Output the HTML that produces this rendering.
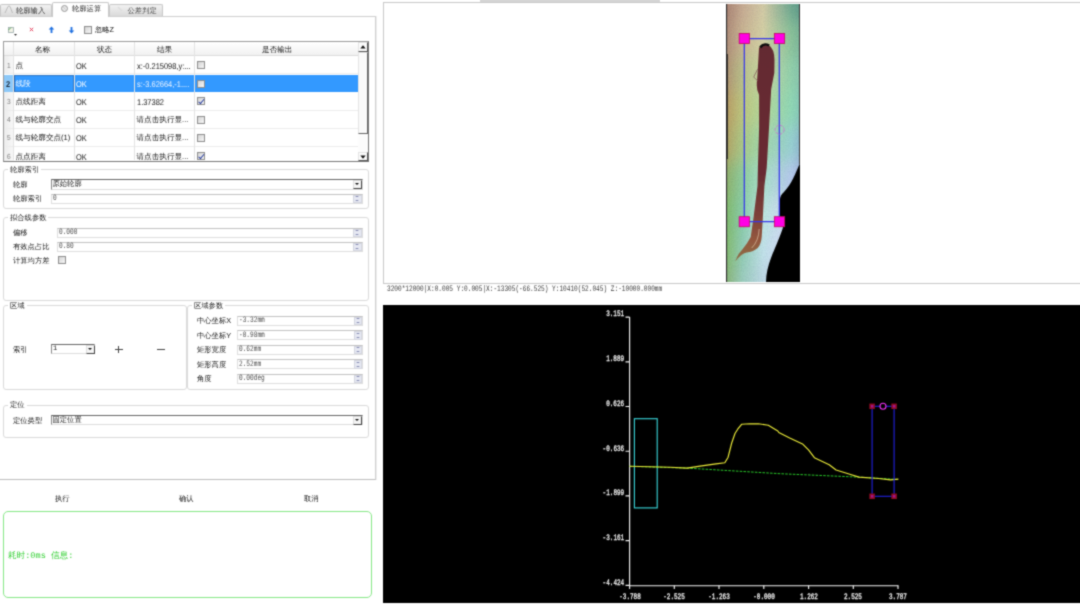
<!DOCTYPE html>
<html lang="zh">
<head>
<meta charset="utf-8">
<title>轮廓运算</title>
<style>
*{box-sizing:border-box;margin:0;padding:0}
html,body{width:1080px;height:607px;overflow:hidden;background:#fff}
body{position:relative;text-rendering:geometricPrecision;-webkit-font-smoothing:antialiased;font-family:"Liberation Sans",sans-serif;font-size:7.6px;color:#141414;filter:url(#soft)}
.a{position:absolute}
.t{position:absolute;white-space:nowrap;line-height:10px;height:10px}
.tab{position:absolute;border:1px solid #c8c8c8;border-bottom:none;background:linear-gradient(#f1f1f1,#dadada);border-radius:2px 2px 0 0}
.grp{position:absolute;border:1px solid #dadada;border-radius:3px}
.glab{position:absolute;background:#fff;padding:0 2px;line-height:9px;height:9px;white-space:nowrap;color:#222}
.inp{position:absolute;border:1px solid #dedede;border-top-color:#c2c2c2;background:#fff;height:10px}
.inp span{position:absolute;left:1px;top:.7px;line-height:8.5px;font-family:"Liberation Mono",monospace;font-size:8.2px;color:#4a4a4a;white-space:nowrap;transform-origin:0 50%;transform:scaleX(.75)}
.spin{position:absolute;right:0;top:0;width:8.5px;height:8.5px;background:#e6e8f2;border:1px solid #d4d6e0}
.spin:before{content:"";position:absolute;left:1.25px;top:0.7px;border:2px solid transparent;border-top:none;border-bottom:1.8px solid #6a70a0}
.spin:after{content:"";position:absolute;left:1.25px;bottom:0.7px;border:2px solid transparent;border-bottom:none;border-top:1.8px solid #6a70a0}
.cmb{position:absolute;border:1px solid #dcdcdc;border-top:1.5px solid #666;border-left:1px solid #888;background:#fff;height:10.5px}
.cmb span{position:absolute;left:1px;top:0;line-height:8px;white-space:nowrap;color:#1c1c1c;font-size:7.3px}
.cmb i{position:absolute;right:-0.5px;top:0;width:9px;height:9px;background:#f4f4f4;border:1px solid #e0e0e0;border-right:1.3px solid #444;border-bottom:1.3px solid #444}
.cmb i:after{content:"";position:absolute;left:1.3px;top:2.2px;border:2.2px solid transparent;border-bottom:none;border-top:2.6px solid #111}
.cb{position:absolute;width:8px;height:8px;border:1px solid #8e8e8e;background:linear-gradient(135deg,#d4d4d4,#f6f6f6)}
.cb.on:after{content:"";position:absolute;left:2px;top:0;width:2px;height:4.5px;border:solid #2a3fa0;border-width:0 1.3px 1.3px 0;transform:rotate(40deg)}
.row{position:absolute;left:4px;width:354px;height:18.2px;border-bottom:1px solid #ececec;background:#fff}
.row .t{top:4.5px}
.rn{position:absolute;left:0;top:0;width:9.5px;height:100%;background:linear-gradient(90deg,#ececec,#f8f8f8)}
.vl{position:absolute;top:0;bottom:0;width:1px;background:#e6e6e6}
.ax{font-family:"Liberation Mono",monospace;font-size:8.4px;color:#f2f2f2;-webkit-text-stroke:.3px currentColor;position:absolute;white-space:nowrap;line-height:8px;height:8px;transform:scaleX(.714)}
.l{display:inline-block;font-size:8.4px;transform:scaleX(.89);transform-origin:0 50%}
.g{font-size:7.3px}
</style>
</head>
<body>
<svg width="0" height="0" style="position:absolute"><filter id="soft" x="0" y="0" width="100%" height="100%" color-interpolation-filters="sRGB"><feConvolveMatrix order="3" kernelMatrix="1 3 1 3 12 3 1 3 1" divisor="28" edgeMode="duplicate" preserveAlpha="true"/></filter></svg>
<!-- ============ LEFT PANEL ============ -->
<div class="a" id="pane" style="left:-1px;top:16px;width:377px;height:464.3px;border:1px solid #cfcfcf;border-bottom:1.5px solid #bdbdbd;background:#fff"></div>
<div class="a" style="left:376px;top:16px;width:1px;height:464px;background:#ededed"></div>

<!-- tabs -->
<div class="tab" style="left:0;top:4px;width:52px;height:12px"></div>
<div class="tab" style="left:109px;top:3.5px;width:54px;height:12.5px"></div>
<div class="tab" style="left:52px;top:1.5px;width:57px;height:15.5px;background:#fff"></div>
<div class="t g" style="left:16px;top:5.6px;color:#333">轮廓输入</div>
<div class="t g" style="left:72px;top:4.2px;color:#222">轮廓运算</div>
<div class="t g" style="left:127.5px;top:5.6px;color:#444">公差判定</div>
<svg class="a" style="left:4px;top:5px" width="10" height="9" viewBox="0 0 10 9"><path d="M1 8 L4 1.5 Q5 0.5 6 1.5 L8.5 8" fill="none" stroke="#bbb" stroke-width="1"/></svg>
<svg class="a" style="left:60px;top:4px" width="9" height="9" viewBox="0 0 9 9"><circle cx="4.5" cy="4.5" r="3" fill="#e8e8e8" stroke="#999" stroke-width="1"/><path d="M3.5 3.5 L5.5 5" stroke="#bbb" stroke-width=".8"/></svg>
<svg class="a" style="left:116px;top:5px" width="10" height="9" viewBox="0 0 10 9"><path d="M2 2 L6 6" stroke="#ddd" stroke-width="1.6"/></svg>

<!-- toolbar -->
<svg class="a" style="left:7px;top:26px" width="12" height="11" viewBox="0 0 12 11"><rect x="1.5" y="1.5" width="5" height="5" fill="#f2f2e6" stroke="#9aa" stroke-width=".8"/><path d="M1.5 4 L4 1.5" stroke="#5a5" stroke-width="1"/><path d="M7 8 h3 l-1.5 1.8z" fill="#222"/></svg>
<svg class="a" style="left:28.5px;top:27.3px" width="5" height="5" viewBox="0 0 6 6"><path d="M1 1 L5 5 M5 1 L1 5" stroke="#e23a55" stroke-width="1.2"/></svg>
<svg class="a" style="left:48px;top:26px" width="7" height="8" viewBox="0 0 7 8"><path d="M3.5 0.5 L6.3 3.6 H4.4 V7 H2.6 V3.6 H0.7z" fill="#1e6fe0"/></svg>
<svg class="a" style="left:68px;top:26px" width="7" height="8" viewBox="0 0 7 8"><path d="M3.5 7.5 L0.7 4.4 H2.6 V1 H4.4 V4.4 H6.3z" fill="#1e6fe0"/></svg>
<div class="cb" style="left:84px;top:26px"></div>
<div class="t g" style="left:95px;top:25px">忽略Z</div>

<!-- table -->
<div class="a" id="tbl" style="left:3px;top:41px;width:366px;height:120.5px;border:1px solid #9a9a9a;border-bottom:1.5px solid #777;border-right:1.5px solid #777;background:#fff"></div>
<div class="a" style="left:4px;top:42px;width:354px;height:14px;background:linear-gradient(#fff,#f1f1f1);border-bottom:1px solid #dcdcdc"></div>
<div class="t" style="left:35px;top:45px">名称</div>
<div class="t" style="left:97px;top:45px">状态</div>
<div class="t" style="left:157px;top:45px">结果</div>
<div class="t" style="left:262px;top:45px">是否输出</div>
<div id="rows"></div>
<div class="row" style="top:56px"><div class="rn"></div><div class="t l" style="left:2.5px;font-size:7.4px;color:#7c7c7c">1</div><div class="t" style="left:11.5px">点</div><div class="t l" style="left:72px">OK</div><div class="t l" style="left:132.5px">x:-0.215098,y:...</div><div class="cb" style="left:193px;top:5px"></div></div>
<div class="row" style="top:74.8px;height:17.6px;background:#3399ff;border-bottom-color:#3399ff"><div class="a" style="left:0;top:0;width:9.5px;height:17px;background:#8cc8f8"></div><div class="a" style="left:9.5px;top:0;width:60.5px;height:17px;border:1px solid #2f78c8;border-left:1.5px solid #2a66ac"></div><div class="t l" style="left:1.8px;font-size:8.4px;color:#1c2a3a;font-weight:bold">2</div><div class="t" style="left:11.5px;color:#fff">线段</div><div class="t l" style="left:72px;color:#fff">OK</div><div class="t l" style="left:132.5px;color:#e8f2ff">s:-3.62664,-1....</div><div class="cb" style="left:193px;top:5px"></div></div>
<div class="row" style="top:92.4px"><div class="rn"></div><div class="t l" style="left:2.5px;font-size:7.4px;color:#7c7c7c">3</div><div class="t" style="left:11.5px">点线距离</div><div class="t l" style="left:72px">OK</div><div class="t l" style="left:132.5px">1.37382</div><div class="cb on" style="left:193px;top:5px"></div></div>
<div class="row" style="top:110.6px"><div class="rn"></div><div class="t l" style="left:2.5px;font-size:7.4px;color:#7c7c7c">4</div><div class="t" style="left:11.5px">线与轮廓交点</div><div class="t l" style="left:72px">OK</div><div class="t" style="left:132.5px">请点击执行显...</div><div class="cb" style="left:193px;top:5px"></div></div>
<div class="row" style="top:128.8px"><div class="rn"></div><div class="t l" style="left:2.5px;font-size:7.4px;color:#7c7c7c">5</div><div class="t" style="left:11.5px">线与轮廓交点(1)</div><div class="t l" style="left:72px">OK</div><div class="t" style="left:132.5px">请点击执行显...</div><div class="cb" style="left:193px;top:5px"></div></div>
<div class="row" style="top:147px;height:13.5px;border-bottom:none;overflow:hidden"><div class="rn"></div><div class="t l" style="left:2.5px;font-size:7.4px;color:#7c7c7c">6</div><div class="t" style="left:11.5px">点点距离</div><div class="t l" style="left:72px">OK</div><div class="t" style="left:132.5px">请点击执行显...</div><div class="cb on" style="left:193px;top:5px"></div></div>
<!-- column lines -->
<div class="a" style="left:13px;top:42px;width:1px;height:118px;background:#e3e3e3"></div>
<div class="a" style="left:73.5px;top:42px;width:1px;height:118px;background:#e3e3e3"></div>
<div class="a" style="left:134px;top:42px;width:1px;height:118px;background:#e3e3e3"></div>
<div class="a" style="left:194px;top:42px;width:1px;height:118px;background:#e3e3e3"></div>
<!-- scrollbar -->
<div class="a" style="left:358px;top:42px;width:10px;height:118.5px;background:#fcfcfc"></div>
<div class="a" style="left:358px;top:42px;width:10px;height:10px;background:#fbfbfb;border:1px solid #e4e4e4;border-right-color:#555;border-bottom-color:#555"></div>
<div class="a" style="left:358px;top:52px;width:10px;height:82px;background:#fafafa;border:1px solid #e4e4e4;border-right:1.5px solid #666;border-bottom:1.5px solid #666"></div>
<div class="a" style="left:358px;top:151.5px;width:10px;height:9.5px;background:#fbfbfb;border:1px solid #e4e4e4;border-right-color:#555;border-bottom-color:#555"></div>
<svg class="a" style="left:360px;top:44.5px" width="6" height="4" viewBox="0 0 6 4"><path d="M3 0.3 L5.7 3.5 H0.3z" fill="#111"/></svg>
<svg class="a" style="left:360px;top:154.5px" width="6" height="4" viewBox="0 0 6 4"><path d="M3 3.7 L5.7 0.5 H0.3z" fill="#111"/></svg>

<!-- group: 轮廓索引 -->
<div class="grp" style="left:3px;top:169px;width:366px;height:40px"></div>
<div class="glab g" style="left:8px;top:165px">轮廓索引</div>
<div class="t g" style="left:13px;top:180px">轮廓</div>
<div class="cmb" style="left:50.5px;top:179px;width:312px"><span>原始轮廓</span><i></i></div>
<div class="t g" style="left:13px;top:194px">轮廓索引</div>
<div class="inp" style="left:50.5px;top:193.5px;width:312px"><span>0</span><div class="spin"></div></div>

<!-- group: 拟合线参数 -->
<div class="grp" style="left:3px;top:217px;width:366px;height:84px"></div>
<div class="glab g" style="left:8px;top:213px">拟合线参数</div>
<div class="t g" style="left:13px;top:228px">偏移</div>
<div class="inp" style="left:57px;top:227.5px;width:305.5px"><span>0.000</span><div class="spin"></div></div>
<div class="t g" style="left:13px;top:242px">有效点占比</div>
<div class="inp" style="left:57px;top:241.5px;width:305.5px"><span>0.80</span><div class="spin"></div></div>
<div class="t g" style="left:13px;top:256px">计算均方差</div>
<div class="cb" style="left:57.5px;top:256px"></div>

<!-- group: 区域 -->
<div class="grp" style="left:3px;top:305px;width:183.5px;height:85px"></div>
<div class="glab g" style="left:8px;top:301px">区域</div>
<div class="t g" style="left:13px;top:345px">索引</div>
<div class="cmb" style="left:51px;top:343.8px;width:44px"><span style="font-family:'Liberation Mono',monospace;font-size:7px">1</span><i></i></div>
<div class="a" style="left:115px;top:349px;width:7.5px;height:1px;background:#444"></div>
<div class="a" style="left:118.3px;top:345.7px;width:1px;height:7.6px;background:#444"></div>
<div class="a" style="left:157px;top:348.9px;width:8px;height:1.2px;background:#444"></div>

<!-- group: 区域参数 -->
<div class="grp" style="left:187px;top:305px;width:182px;height:85px"></div>
<div class="glab g" style="left:192px;top:301px">区域参数</div>
<div class="t g" style="left:197px;top:316px">中心坐标X</div>
<div class="inp" style="left:237px;top:315.5px;width:126px"><span>-3.32mm</span><div class="spin"></div></div>
<div class="t g" style="left:197px;top:330.5px">中心坐标Y</div>
<div class="inp" style="left:237px;top:330px;width:126px"><span>-0.98mm</span><div class="spin"></div></div>
<div class="t g" style="left:197px;top:345px">矩形宽度</div>
<div class="inp" style="left:237px;top:344.5px;width:126px"><span>0.62mm</span><div class="spin"></div></div>
<div class="t g" style="left:197px;top:359.5px">矩形高度</div>
<div class="inp" style="left:237px;top:359px;width:126px"><span>2.52mm</span><div class="spin"></div></div>
<div class="t g" style="left:197px;top:374px">角度</div>
<div class="inp" style="left:237px;top:373.5px;width:126px"><span>0.00deg</span><div class="spin"></div></div>

<!-- group: 定位 -->
<div class="grp" style="left:3px;top:405px;width:366px;height:32.5px"></div>
<div class="glab g" style="left:8px;top:400px">定位</div>
<div class="t g" style="left:13px;top:415.5px">定位类型</div>
<div class="cmb" style="left:50.5px;top:414.5px;width:312px"><span>固定位置</span><i></i></div>

<!-- buttons -->
<div class="t g" style="left:55px;top:494px">执行</div>
<div class="t g" style="left:179px;top:494px">确认</div>
<div class="t g" style="left:304px;top:494px">取消</div>

<!-- message box -->
<div class="a" style="left:2.5px;top:511px;width:369px;height:87px;border:1.3px solid #86e886;border-radius:5px;background:#fff"></div>
<div class="t" style="left:8px;top:550px;color:#35d035;font-family:'Liberation Mono',monospace;font-size:8.6px"><span style="font-family:'Liberation Sans',sans-serif">耗时</span>:0ms <span style="font-family:'Liberation Sans',sans-serif">信息</span>:</div>

<!-- ============ RIGHT TOP: IMAGE VIEW ============ -->
<div class="a" style="left:480px;top:0;width:180px;height:1.5px;background:#d5d5d5"></div>
<div class="a" id="imgpane" style="left:383px;top:1.5px;width:700px;height:282px;border:1.5px solid #c8c8c8;background:#fff"></div>
<svg class="a" id="strip" style="left:726px;top:3.5px" width="74" height="278" viewBox="0 0 74 278">
<defs>
<linearGradient id="r0" x1="0" y1="0" x2="1" y2="0"><stop offset="0" stop-color="#a07868"/><stop offset="0.15" stop-color="#a07868"/><stop offset="0.32" stop-color="#c4a68e"/><stop offset="0.5" stop-color="#d0c6a2"/><stop offset="0.75" stop-color="#62a088"/><stop offset="1" stop-color="#2f7074"/></linearGradient>
<linearGradient id="r1" x1="0" y1="0" x2="1" y2="0"><stop offset="0" stop-color="#a27a6a"/><stop offset="0.15" stop-color="#a27a6a"/><stop offset="0.32" stop-color="#c6aa90"/><stop offset="0.5" stop-color="#d2caa4"/><stop offset="0.75" stop-color="#6ea88e"/><stop offset="1" stop-color="#387878"/></linearGradient>
<linearGradient id="r2" x1="0" y1="0" x2="1" y2="0"><stop offset="0" stop-color="#aa8472"/><stop offset="0.15" stop-color="#aa8472"/><stop offset="0.32" stop-color="#c8b490"/><stop offset="0.5" stop-color="#d4d0a2"/><stop offset="0.75" stop-color="#8ac298"/><stop offset="1" stop-color="#589a96"/></linearGradient>
<linearGradient id="r3" x1="0" y1="0" x2="1" y2="0"><stop offset="0" stop-color="#ae8a6c"/><stop offset="0.15" stop-color="#ae8a6c"/><stop offset="0.32" stop-color="#b8c088"/><stop offset="0.5" stop-color="#c8d8a0"/><stop offset="0.75" stop-color="#90d0aa"/><stop offset="1" stop-color="#72aeae"/></linearGradient>
<linearGradient id="r4" x1="0" y1="0" x2="1" y2="0"><stop offset="0" stop-color="#b8945c"/><stop offset="0.15" stop-color="#b8945c"/><stop offset="0.32" stop-color="#bcc67c"/><stop offset="0.5" stop-color="#b4d898"/><stop offset="0.75" stop-color="#8ed8b4"/><stop offset="1" stop-color="#70a4ba"/></linearGradient>
<linearGradient id="r5" x1="0" y1="0" x2="1" y2="0"><stop offset="0" stop-color="#b49c5c"/><stop offset="0.15" stop-color="#b49c5c"/><stop offset="0.32" stop-color="#aac884"/><stop offset="0.5" stop-color="#a0d8aa"/><stop offset="0.75" stop-color="#96d0d0"/><stop offset="1" stop-color="#7a86c2"/></linearGradient>
<linearGradient id="r6" x1="0" y1="0" x2="1" y2="0"><stop offset="0" stop-color="#8eac60"/><stop offset="0.15" stop-color="#8eac60"/><stop offset="0.32" stop-color="#8ccc9c"/><stop offset="0.5" stop-color="#a8e0c8"/><stop offset="0.75" stop-color="#b4c8ec"/><stop offset="1" stop-color="#8e8eca"/></linearGradient>
<linearGradient id="r7" x1="0" y1="0" x2="1" y2="0"><stop offset="0" stop-color="#7eb85e"/><stop offset="0.15" stop-color="#7eb85e"/><stop offset="0.32" stop-color="#88cca8"/><stop offset="0.5" stop-color="#bce6de"/><stop offset="0.75" stop-color="#d0d6f6"/><stop offset="1" stop-color="#a8a8dc"/></linearGradient>
<linearGradient id="r8" x1="0" y1="0" x2="1" y2="0"><stop offset="0" stop-color="#80b860"/><stop offset="0.15" stop-color="#80b860"/><stop offset="0.32" stop-color="#90ccb2"/><stop offset="0.5" stop-color="#c0e2e8"/><stop offset="0.75" stop-color="#d6d6f8"/><stop offset="1" stop-color="#b0b0d8"/></linearGradient>
<linearGradient id="r9" x1="0" y1="0" x2="1" y2="0"><stop offset="0" stop-color="#84b06a"/><stop offset="0.15" stop-color="#84b06a"/><stop offset="0.32" stop-color="#9accbc"/><stop offset="0.5" stop-color="#bcd8e4"/><stop offset="0.75" stop-color="#d0d0f2"/><stop offset="1" stop-color="#b0b0d8"/></linearGradient>
<linearGradient id="r10" x1="0" y1="0" x2="1" y2="0"><stop offset="0" stop-color="#84b06a"/><stop offset="0.15" stop-color="#84b06a"/><stop offset="0.32" stop-color="#9accbc"/><stop offset="0.5" stop-color="#bcd8e4"/><stop offset="0.75" stop-color="#d0d0f2"/><stop offset="1" stop-color="#b0b0d8"/></linearGradient>
<filter id="vb" x="-30%" y="-10%" width="160%" height="120%"><feGaussianBlur stdDeviation="0 9"/></filter>
<filter id="bl"><feGaussianBlur stdDeviation="0.5"/></filter>
<filter id="nz" x="0" y="0" width="100%" height="100%"><feTurbulence type="fractalNoise" baseFrequency="0.9" numOctaves="2" seed="3" result="n"/><feColorMatrix type="matrix" values="0 0 0 0 1  0 0 0 0 1  0 0 0 0 1  0.9 0 0 0 -0.33"/></filter>
<filter id="nd" x="0" y="0" width="100%" height="100%"><feTurbulence type="fractalNoise" baseFrequency="0.8" numOctaves="2" seed="11" result="n"/><feColorMatrix type="matrix" values="0 0 0 0 0  0 0 0 0 0  0 0 0 0 0.1  0 0.9 0 0 -0.33"/></filter>
<linearGradient id="sg" gradientUnits="userSpaceOnUse" x1="0" y1="40" x2="0" y2="260"><stop offset="0" stop-color="#642a30"/><stop offset=".6" stop-color="#682c30"/><stop offset=".78" stop-color="#7c4038"/><stop offset=".9" stop-color="#94583e"/><stop offset="1" stop-color="#8a7048"/></linearGradient>
<clipPath id="cp"><rect width="74" height="278"/></clipPath>
</defs>
<g clip-path="url(#cp)">
<g filter="url(#vb)">
<rect x="-20" y="-40" width="114" height="30.5" fill="url(#r0)"/>
<rect x="-20" y="-10" width="114" height="28" fill="url(#r1)"/>
<rect x="-20" y="17.5" width="114" height="35.5" fill="url(#r2)"/>
<rect x="-20" y="52.5" width="114" height="35.5" fill="url(#r3)"/>
<rect x="-20" y="87.5" width="114" height="35.5" fill="url(#r4)"/>
<rect x="-20" y="122.5" width="114" height="35.5" fill="url(#r5)"/>
<rect x="-20" y="157.5" width="114" height="35.5" fill="url(#r6)"/>
<rect x="-20" y="192.5" width="114" height="35.5" fill="url(#r7)"/>
<rect x="-20" y="227.5" width="114" height="34.5" fill="url(#r8)"/>
<rect x="-20" y="261.5" width="114" height="28" fill="url(#r9)"/>
<rect x="-20" y="289" width="114" height="31.5" fill="url(#r10)"/>
</g>
<rect width="74" height="278" filter="url(#nz)" opacity=".16"/>
<rect width="74" height="278" filter="url(#nd)" opacity=".13"/>
<!-- black region bottom-right -->
<path d="M74.5 158 C70 168 66 180 58 188 Q54 191 54 196 L54 212 Q58 222 56.5 225 C52 238 48 246 45 254 C42 262 40 270 40 279 L74.5 279z" fill="#000"/>
<!-- dark specimen strip -->
<g transform="translate(0.7 -1)">
<path filter="url(#bl)" d="M32.3 45 Q36 40 42 42 Q48 46 47.8 58 L47.6 70 L44.5 86 L42.3 125 L40 165 L37.7 183 L36 217 L35 234 Q34.5 241 31 245 Q26 249 20 249.5 Q14 251 8.5 258.5 Q11 251 16 246 Q21 240 24 234 L26.5 217 L30.8 183 L31.2 165 L32.4 125 L32.4 92 Q29 86 30.5 76 Q31.5 60 32.3 45 Z" fill="url(#sg)"/>
<path d="M32.5 226 Q32 238 25 245" stroke="#f0dcc0" stroke-width="1" fill="none" opacity=".55"/>
<path d="M33.5 44.5 Q37 39.5 42.5 42.5" stroke="#0c0c0c" stroke-width="2.4" fill="none"/>
<path d="M31 66 L27 74 L31 78" stroke="#8a6a62" stroke-width=".9" fill="none"/>
</g>
<rect x="-0.2" y="0" width="1.3" height="278" fill="#2c2c2c"/>
<rect x="0" y="50" width="2" height="105" fill="#222" opacity=".8"/>
<rect x="73" y="0" width="1.2" height="160" fill="#333"/>
<!-- ROI rect -->
<path d="M18.3 34.5 H53.3 M18.3 217.6 H53.3 M18.3 34.5 V217.5 M53.3 34.5 V217" fill="none" stroke="#3636ea" stroke-width="1.25"/>
<circle cx="53.6" cy="125.7" r="4.5" fill="none" stroke="#d060d0" stroke-width=".8" stroke-dasharray="3 1.2" opacity=".85"/>
<g fill="#ff00e4" stroke="#c4106c" stroke-width=".9">
<rect x="13.2" y="29.5" width="10.2" height="10"/><rect x="48.4" y="29.5" width="10.2" height="10"/>
<rect x="13.2" y="212.7" width="10.2" height="10"/><rect x="48.4" y="212.7" width="10.2" height="10"/>
</g>
</g>
</svg>
<div class="ax" style="left:386.5px;top:284.7px;color:#3c3c3c;-webkit-text-stroke:0;transform-origin:0 50%;transform:scaleX(.73)">3200*12000|X:0.005 Y:0.005|X:-13305(-66.525) Y:10410(52.045) Z:-10000.000mm</div>

<!-- ============ RIGHT BOTTOM: PROFILE CHART ============ -->
<div class="a" style="left:383px;top:304.5px;width:697px;height:298.5px;background:#000"></div>
<svg class="a" style="left:383px;top:304.5px" width="697" height="298.5" viewBox="383 304.5 697 298.5">
<g stroke="#f4f4f4" stroke-width="1.15" fill="none">
<path d="M629.6 316.6 V585.2 H898.4"/>
<path d="M625.5 316.6 H629.6 M625.5 361.3 H629.6 M625.5 406 H629.6 M625.5 450.7 H629.6 M625.5 495.4 H629.6 M625.5 540.1 H629.6 M625.5 584.9 H629.6"/>
<path d="M629.6 585 V588.5 M674.3 585 V588.5 M719 585 V588.5 M763.8 585 V588.5 M808.6 585 V588.5 M853.3 585 V588.5 M898 585 V588.5"/>
</g>
<rect x="634.4" y="418.2" width="22.8" height="89.2" fill="none" stroke="#38d0d4" stroke-width="1.15"/>
<path d="M629.6 465.8 L687 467.6 L780 473.2 L858 476.6 L898 479" stroke="#28c828" stroke-width="1" stroke-dasharray="2.6 1.2" fill="none"/>
<path d="M629.6 465.7 L650 466.2 L670 466.8 L687 467.6 L700 465.6 L716 463.4 L724.8 462.3 L728 457 L731.7 442.5 L735 433 L737.7 428.7 L741.6 423.8 L750 423.3 L758.4 423.3 L768.3 424.7 L777.8 430.5 L778.8 432 L789.7 437.5 L802.5 443.4 L808.5 449.3 L814.4 457.2 L829.2 464.2 L836.1 469.5 L849 473.5 L858.9 476.6 L878.7 478 L890.5 479.4 L898.4 478.6" stroke="#eaea38" stroke-width="1.15" fill="none" stroke-linejoin="round"/>
<rect x="872.1" y="405.8" width="22" height="90" fill="none" stroke="#2020e0" stroke-width="1.1"/>
<g fill="#a01490" stroke="#900c22" stroke-width="1.5">
<rect x="870.1" y="403.8" width="4" height="4"/><rect x="892.1" y="403.8" width="4" height="4"/>
<rect x="870.1" y="493.8" width="4" height="4"/><rect x="892.1" y="493.8" width="4" height="4"/>
</g>
<circle cx="883" cy="405.8" r="3" fill="#000" stroke="#f030f0" stroke-width="1.1"/>
</svg>
<!-- y labels -->
<div class="ax" style="right:455.5px;top:310.4px;transform-origin:100% 50%">3.151</div>
<div class="ax" style="right:455.5px;top:355.1px;transform-origin:100% 50%">1.889</div>
<div class="ax" style="right:455.5px;top:399.8px;transform-origin:100% 50%">0.626</div>
<div class="ax" style="right:455.5px;top:444.5px;transform-origin:100% 50%">-0.636</div>
<div class="ax" style="right:455.5px;top:489.2px;transform-origin:100% 50%">-1.899</div>
<div class="ax" style="right:455.5px;top:533.9px;transform-origin:100% 50%">-3.161</div>
<div class="ax" style="right:455.5px;top:578.6px;transform-origin:100% 50%">-4.424</div>
<!-- x labels -->
<div class="ax xl" style="left:599.6px;top:593px;width:60px;text-align:center">-3.788</div>
<div class="ax xl" style="left:644.3px;top:593px;width:60px;text-align:center">-2.525</div>
<div class="ax xl" style="left:689px;top:593px;width:60px;text-align:center">-1.263</div>
<div class="ax xl" style="left:733.8px;top:593px;width:60px;text-align:center">-0.000</div>
<div class="ax xl" style="left:778.6px;top:593px;width:60px;text-align:center">1.262</div>
<div class="ax xl" style="left:823.3px;top:593px;width:60px;text-align:center">2.525</div>
<div class="ax xl" style="left:868px;top:593px;width:60px;text-align:center">3.787</div>
</body>
</html>
